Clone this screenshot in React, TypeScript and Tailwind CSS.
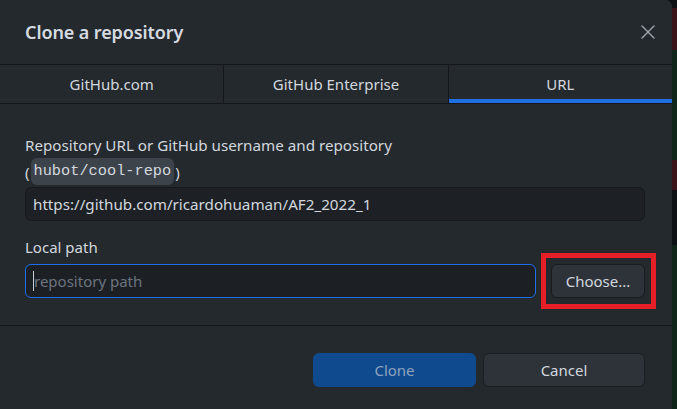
import { X } from 'lucide-react';

const tabs = ['GitHub.com', 'GitHub Enterprise', 'URL'];

export default function App() {
  return (
    <div className="flex h-[409px] w-[677px] overflow-hidden bg-[#0f1215] font-['Noto_Sans',sans-serif]">
      <div className="flex w-[672px] flex-col rounded-tr-[6px] bg-[#24292e] text-[#d3d8de]">
        {/* Header */}
        <div className="flex h-[65px] items-center justify-between border-b border-[#141619] pl-[25px] pr-[12px]">
          <h1 className="text-[18px] font-semibold tracking-[-0.1px] text-[#d6dbe0]">Clone a repository</h1>
          <X className="h-[24px] w-[24px] text-[#9aa1a9]" strokeWidth={1.4} />
        </div>

        {/* Tabs */}
        <div className="flex h-[39px] border-b border-[#141619]">
          {tabs.map((tab, i) => (
            <div
              key={tab}
              className={`relative flex flex-1 items-center justify-center text-[15px] ${
                i < tabs.length - 1 ? 'border-r border-[#141619]' : ''
              }`}
            >
              <span className="mt-[1px]">{tab}</span>
              {i === 2 && <div className="absolute bottom-0 left-0 right-0 h-[4px] bg-[#1f6fe0]" />}
            </div>
          ))}
        </div>

        {/* Body */}
        <div className="flex flex-col border-b border-[#141619] pb-[27px] pl-[25px] pr-[27px] pt-[31px]">
          <div className="text-[15.2px] leading-[21px]">Repository URL or GitHub username and repository</div>
          <div className="mt-[2px] flex items-center text-[15px] leading-[24px]">
            (
            <code className="mx-[1px] rounded-[6px] bg-[#3d434b] px-[3px] font-['Liberation_Mono',monospace] text-[15.3px] leading-[27px] text-[#d3d8de]">
              hubot/cool-repo
            </code>
            )
          </div>
          <div className="mt-[2px] flex h-[34px] items-center rounded-[6px] border border-[#17191d] bg-[#1d2126] px-[7px] text-[15.2px]">
            https://github.com/ricardohuaman/AF2_2022_1
          </div>

          <div className="mt-[16px] text-[15px] leading-[21px]">Local path</div>
          <div className="mt-[6px] flex items-center gap-[15px]">
            <div className="flex h-[34px] flex-1 items-center rounded-[6px] border border-[#1f6feb] bg-[#1c2025] pl-[7px] text-[15px] text-[#6c747e]">
              <span className="h-[20px] w-[1px] bg-[#c9ced4]" />
              <span>repository path</span>
            </div>
            <div className="relative">
              <button className="flex h-[34px] w-[94px] items-center justify-center rounded-[6px] border border-[#181b1f] bg-[#2e333a] text-[15px] text-[#d3d8de]">
                Choose...
              </button>
              <div className="pointer-events-none absolute -bottom-[11px] -left-[10px] -right-[11px] -top-[11px] border-[5px] border-[#e61e26]" />
            </div>
          </div>
        </div>

        {/* Footer */}
        <div className="flex justify-end gap-[7px] pr-[27px] pt-[27px]">
          <button className="flex h-[34px] w-[163px] items-center justify-center rounded-[6px] bg-[#0f4a8f] text-[15px] text-[#8fa3bb]">
            Clone
          </button>
          <button className="flex h-[34px] w-[162px] items-center justify-center rounded-[6px] border border-[#1a1d21] bg-[#2e333a] text-[15px] text-[#d3d8de]">
            Cancel
          </button>
        </div>
      </div>
      <div className="flex flex-1 flex-col">
        <div className="h-[8px] bg-[#0f1215]" />
        <div className="h-[42px] bg-[#3a1418]" />
        <div className="h-[110px] bg-[#10261a]" />
        <div className="h-[30px] bg-[#3a1418]" />
        <div className="h-[55px] bg-[#0f1215]" />
        <div className="flex-1 bg-[#10261a]" />
      </div>
    </div>
  );
}
